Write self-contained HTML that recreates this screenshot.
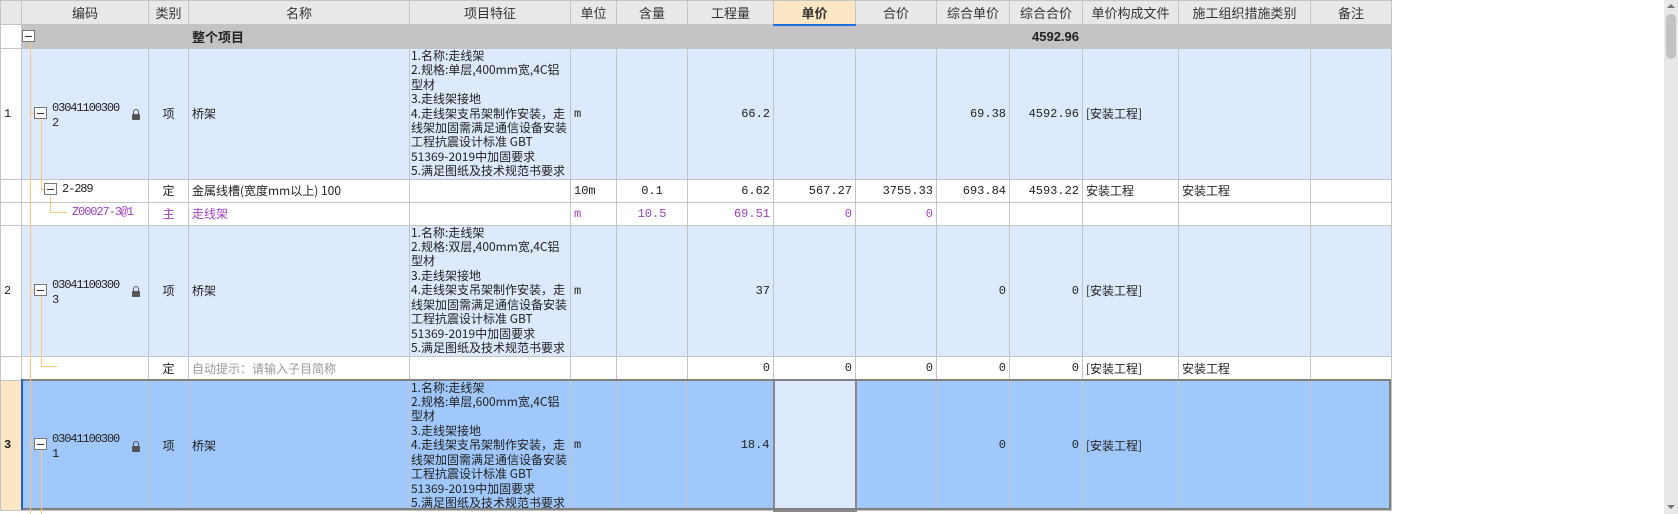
<!DOCTYPE html>
<html><head><meta charset="utf-8"><style>
*{margin:0;padding:0;box-sizing:border-box}
body{width:1678px;height:514px;overflow:hidden;background:#fff;font-family:"Liberation Mono","Noto Sans CJK SC",monospace;font-size:12px;color:#222;position:relative}
table{position:absolute;left:0;top:0;border-collapse:collapse;table-layout:fixed;width:1391px}
td{border:1px solid #c4c4c4;padding:0 3px;overflow:hidden;white-space:nowrap;vertical-align:middle}
.h td{background:#e8e8e8;text-align:center;font-family:"Liberation Sans","Noto Sans CJK SC",sans-serif;font-size:13px;height:24px;color:#333}
.h td.sel{background:#fde6c4;font-weight:bold;border-bottom:2px solid #1f6fe0}
.g td{background:#c3c3c3;height:24px;font-weight:bold;font-family:"Liberation Sans","Noto Sans CJK SC",sans-serif;font-size:13px}
.b td{background:#dde9fc}
.s td{background:#a0c8fa}
.r{text-align:right}
.c{text-align:center}
.f{white-space:normal;line-height:14.4px;padding:0 1px;font-family:"Noto Sans CJK SC",sans-serif;font-size:12px;vertical-align:top}
.p{color:#a040c0}
.gr{color:#999}
.cn{font-family:"Noto Sans CJK SC",sans-serif}
.ab{position:absolute}
.code{position:absolute;font-family:"Liberation Mono",monospace;font-size:12px;letter-spacing:-1.1px;line-height:15px;white-space:nowrap}
.vl{position:absolute;width:1px;background:#fbc77a}
.hl{position:absolute;height:1px;background:#fbc77a}
.bx{position:absolute;width:13px;height:12px;border:1px solid #777;background:#fff}
.bx:after{content:"";position:absolute;left:2px;right:2px;top:5px;height:1px;background:#333}
.lk{position:absolute;width:8px;height:6px;background:#555;border-radius:1px}
.lk:before{content:"";position:absolute;left:1px;top:-5px;width:4px;height:5px;border:1px solid #555;border-bottom:none;border-radius:3px 3px 0 0}
</style></head><body>
<table>
<colgroup><col style="width:21px"><col style="width:127px"><col style="width:40px"><col style="width:221px"><col style="width:161px"><col style="width:46px"><col style="width:71px"><col style="width:86px"><col style="width:82px"><col style="width:81px"><col style="width:73px"><col style="width:73px"><col style="width:96px"><col style="width:132px"><col style="width:81px"></colgroup>
<tr class="h"><td></td><td>编码</td><td>类别</td><td>名称</td><td>项目特征</td><td>单位</td><td>含量</td><td>工程量</td><td class="sel">单价</td><td>合价</td><td>综合单价</td><td>综合合价</td><td>单价构成文件</td><td>施工组织措施类别</td><td>备注</td></tr>
<tr class="g"><td style="background:#fff"></td><td></td><td></td><td>整个项目</td><td></td><td></td><td></td><td></td><td></td><td></td><td></td><td class="r">4592.96</td><td></td><td></td><td></td></tr>
<tr class="b" style="height:130px"><td style="background:#fff">1</td><td></td><td class="c cn">项</td><td class="cn">桥架</td><td class="f">1.名称:走线架<br>2.规格:单层,400mm宽,4C铝型材<br>3.走线架接地<br>4.走线架支吊架制作安装，走线架加固需满足通信设备安装工程抗震设计标准 GBT 51369-2019中加固要求<br>5.满足图纸及技术规范书要求</td><td>m</td><td></td><td class="r">66.2</td><td></td><td></td><td class="r">69.38</td><td class="r">4592.96</td><td class="cn">[安装工程]</td><td></td><td></td></tr>
<tr style="height:23px"><td></td><td></td><td class="c cn">定</td><td class="cn">金属线槽(宽度mm以上) 100</td><td></td><td>10m</td><td class="c">0.1</td><td class="r">6.62</td><td class="r">567.27</td><td class="r">3755.33</td><td class="r">693.84</td><td class="r">4593.22</td><td class="cn">安装工程</td><td class="cn">安装工程</td><td></td></tr>
<tr style="height:23px" class="p"><td></td><td></td><td class="c cn">主</td><td class="cn">走线架</td><td></td><td>m</td><td class="c">10.5</td><td class="r">69.51</td><td class="r">0</td><td class="r">0</td><td></td><td></td><td></td><td></td><td></td></tr>
<tr class="b" style="height:131px"><td style="background:#fff">2</td><td></td><td class="c cn">项</td><td class="cn">桥架</td><td class="f">1.名称:走线架<br>2.规格:双层,400mm宽,4C铝型材<br>3.走线架接地<br>4.走线架支吊架制作安装，走线架加固需满足通信设备安装工程抗震设计标准 GBT 51369-2019中加固要求<br>5.满足图纸及技术规范书要求</td><td>m</td><td></td><td class="r">37</td><td></td><td></td><td class="r">0</td><td class="r">0</td><td class="cn">[安装工程]</td><td></td><td></td></tr>
<tr style="height:24px"><td></td><td></td><td class="c cn">定</td><td class="cn gr">自动提示：请输入子目简称</td><td></td><td></td><td></td><td class="r">0</td><td class="r">0</td><td class="r">0</td><td class="r">0</td><td class="r">0</td><td class="cn">[安装工程]</td><td class="cn">安装工程</td><td></td></tr>
<tr class="s" style="height:130px"><td style="background:#fde6c4;font-weight:bold">3</td><td></td><td class="c cn">项</td><td class="cn">桥架</td><td class="f">1.名称:走线架<br>2.规格:单层,600mm宽,4C铝型材<br>3.走线架接地<br>4.走线架支吊架制作安装，走线架加固需满足通信设备安装工程抗震设计标准 GBT 51369-2019中加固要求<br>5.满足图纸及技术规范书要求</td><td>m</td><td></td><td class="r">18.4</td><td style="background:#dde9fc;border:2px solid #888"></td><td></td><td class="r">0</td><td class="r">0</td><td class="cn">[安装工程]</td><td></td><td></td></tr>
</table>
<div class="ab" style="left:21px;top:379px;width:1370px;height:131px;border:2px solid #808080"></div>
<div class="ab" style="left:21px;top:379px;width:2px;height:131px;background:#2a5fc0"></div>
<!-- codes -->
<div class="code" style="left:52px;top:101px">03041100300<br>2</div>
<div class="code" style="left:62px;top:182px">2-289</div>
<div class="code p" style="left:72px;top:205px">Z00027-3@1</div>
<div class="code" style="left:52px;top:278px">03041100300<br>3</div>
<div class="code" style="left:52px;top:432px">03041100300<br>1</div>
<!-- tree lines -->
<div class="vl" style="left:30px;top:42px;height:472px"></div>
<div class="hl" style="left:30px;top:113px;width:4px"></div>
<div class="hl" style="left:30px;top:290px;width:4px"></div>
<div class="hl" style="left:30px;top:444px;width:4px"></div>
<div class="vl" style="left:41px;top:119px;height:71px"></div>
<div class="hl" style="left:41px;top:189px;width:4px"></div>
<div class="vl" style="left:50px;top:195px;height:18px"></div>
<div class="hl" style="left:50px;top:212px;width:17px"></div>
<div class="vl" style="left:41px;top:296px;height:71px"></div>
<div class="hl" style="left:41px;top:366px;width:16px"></div>
<div class="vl" style="left:41px;top:450px;height:64px"></div>
<div class="bx" style="left:22px;top:30px"></div>
<div class="bx" style="left:34px;top:107px"></div>
<div class="bx" style="left:44px;top:183px"></div>
<div class="bx" style="left:34px;top:284px"></div>
<div class="bx" style="left:34px;top:438px"></div>
<div class="lk" style="left:132px;top:114px"></div>
<div class="lk" style="left:132px;top:291px"></div>
<div class="lk" style="left:132px;top:446px"></div>
<!-- scrollbar -->
<div class="ab" style="left:1664px;top:0;width:14px;height:514px;background:#e8e8e8"></div>
<div class="ab" style="left:1666px;top:14px;width:10px;height:45px;background:#c2c2c2;border-radius:5px"></div>
<div class="ab" style="left:1667px;top:4px;width:0;height:0;border-left:4px solid transparent;border-right:4px solid transparent;border-bottom:4px solid #777"></div>
<div class="ab" style="left:1667px;top:505px;width:0;height:0;border-left:4px solid transparent;border-right:4px solid transparent;border-top:4px solid #777"></div>
</body></html>
